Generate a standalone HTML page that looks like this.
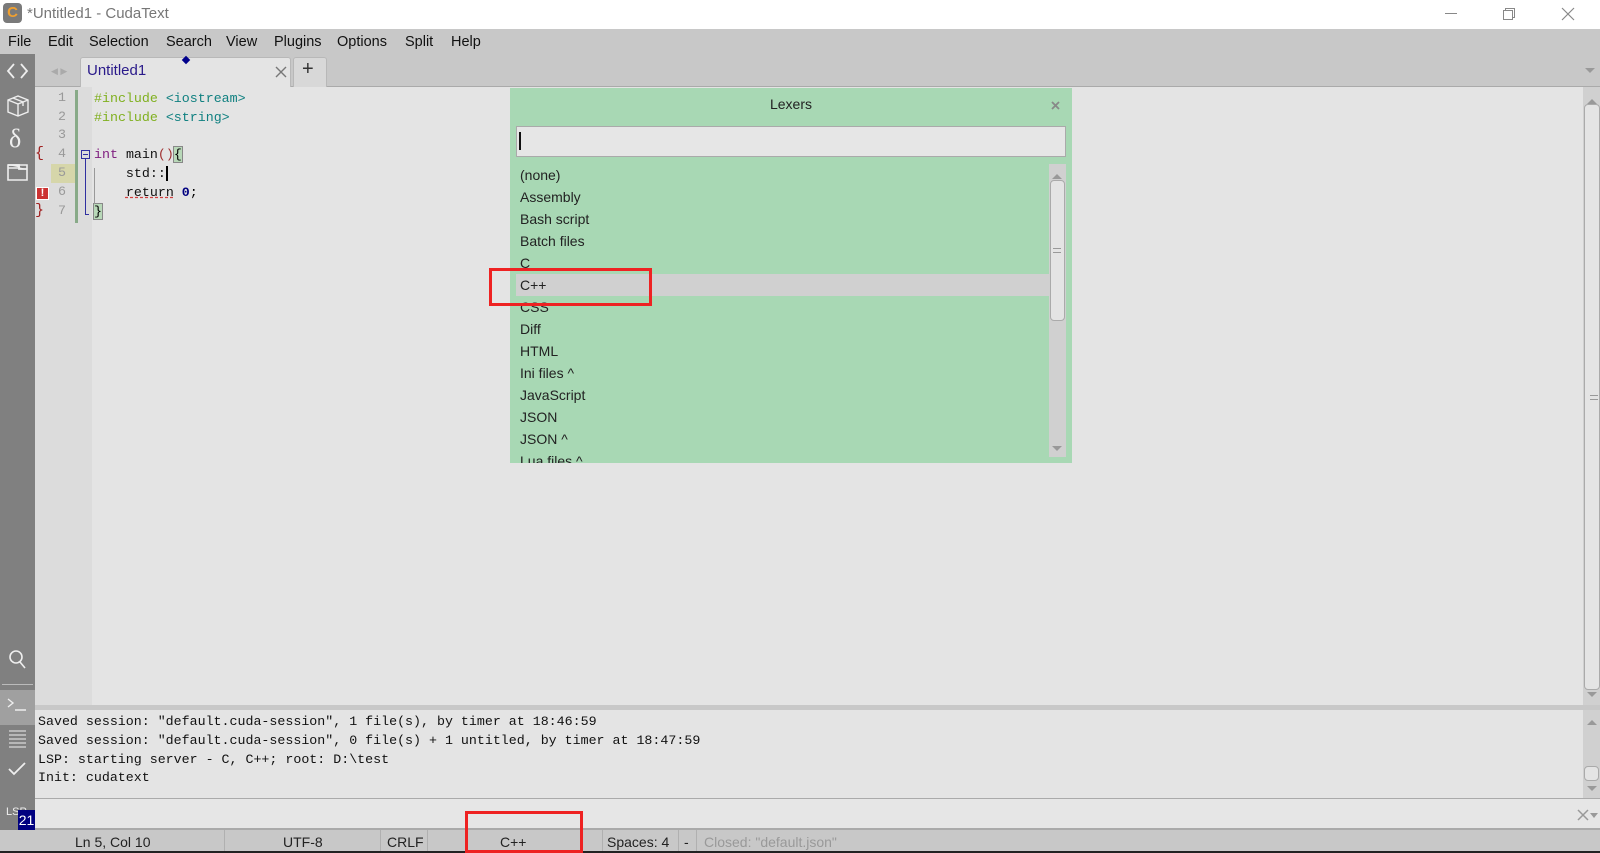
<!DOCTYPE html>
<html><head><meta charset="utf-8"><style>
*{margin:0;padding:0;box-sizing:border-box}
body{width:1600px;height:853px;overflow:hidden;background:#e4e4e4;font-family:"Liberation Sans",sans-serif;position:relative}
.a{position:absolute}
.mono{font-family:"Liberation Mono",monospace;font-size:13.3px;white-space:pre}
.menu span{position:absolute;top:5px;font-size:14.5px;color:#111}
.ln{position:absolute;left:40px;width:26px;text-align:right;color:#999;font-family:"Liberation Mono",monospace;font-size:13.3px}
.li{position:absolute;left:520px;font-size:14px;color:#222;white-space:nowrap}
.st{position:absolute;top:834px;font-size:14px;color:#222;white-space:nowrap}
.sep{position:absolute;top:830px;width:1px;height:21px;background:#b0b0b0}
</style></head><body>
<!-- title bar -->
<div class="a" style="left:0;top:0;width:1600px;height:29px;background:#fff"></div>
<div class="a" style="left:3px;top:3px;width:19px;height:20px;background:#7a7a7a;border-radius:4px"></div>
<div class="a" style="left:3px;top:4px;width:19px;text-align:center;font-size:15px;line-height:18px;color:#f0a030;font-weight:bold">C</div>
<div class="a" style="left:27px;top:5px;font-size:15px;color:#777">*Untitled1 - CudaText</div>
<div class="a" style="left:1445px;top:13px;width:12px;height:1px;background:#888"></div>
<div class="a" style="left:1505px;top:8px;width:10px;height:10px;border:1px solid #888"></div>
<div class="a" style="left:1503px;top:10px;width:10px;height:10px;border:1px solid #888;background:#fff"></div>
<svg class="a" style="left:1561px;top:7px" width="14" height="14"><path d="M1 1L13 13M13 1L1 13" stroke="#888" stroke-width="1.2"/></svg>
<!-- menu -->
<div class="a menu" style="left:0;top:29px;width:1600px;height:58px;background:#c8c8c8">
<span style="left:8px">File</span><span style="left:48px">Edit</span><span style="left:89px">Selection</span><span style="left:166px">Search</span><span style="left:226px">View</span><span style="left:274px">Plugins</span><span style="left:337px">Options</span><span style="left:405px">Split</span><span style="left:451px">Help</span>
</div>
<div class="a" style="left:35px;top:86px;width:1565px;height:1px;background:#aaa"></div>
<!-- tabs -->
<div class="a" style="left:51px;top:66px;color:#aaa;font-size:9px">◀ ▶</div>
<div class="a" style="left:80px;top:57px;width:211px;height:30px;background:#e4e4e4;border:1px solid #b8b8b8;border-bottom:none;border-radius:3px 3px 0 0"></div>
<div class="a" style="left:87px;top:62px;font-size:15px;color:#2a1a8a">Untitled1</div>
<svg class="a" style="left:275px;top:66px" width="12" height="12"><path d="M1 1L11 11M11 1L1 11" stroke="#777" stroke-width="1.4"/></svg>
<div class="a" style="left:183px;top:57px;width:6px;height:6px;background:#00008b;transform:rotate(45deg)"></div>
<div class="a" style="left:293px;top:57px;width:34px;height:30px;background:#d8d8d8;border:1px solid #b8b8b8;border-bottom:none;border-radius:3px 3px 0 0"></div>
<div class="a" style="left:302px;top:58px;font-size:20px;color:#333">+</div>
<div class="a" style="left:1585px;top:68px;border:5px solid transparent;border-top:5px solid #999"></div>
<!-- sidebar -->
<div class="a" style="left:0;top:54px;width:35px;height:777px;background:#808080"></div>
<div class="a" style="left:0;top:690px;width:35px;height:35px;background:#a0a0a0"></div>
<div class="a" style="left:2px;top:684px;width:31px;height:1px;background:#bbb"></div>
<svg class="a" style="left:0;top:54px" width="35" height="780" fill="none" stroke="#eee" stroke-width="1.8">
<path d="M14 10L8 17L14 24M21 10L27 17L21 24"/>
<path d="M8 46L18 42L28 46L28 58L18 62L8 58ZM8 46L18 50L28 46M18 50L18 62M13 44L23 48L23 52" stroke-width="1.4"/>
<text x="9" y="93" fill="#eee" stroke="none" font-size="26" font-family="Liberation Serif">δ</text>
<path d="M8 111H27V126H8ZM8 114H19V111" stroke-width="1.6"/>
<path d="M8 111H19V115H27" fill="#eee"/>
<circle cx="16" cy="603" r="6" stroke-width="1.6"/><path d="M20 608L25 614" stroke-width="1.6"/>
<path d="M8 645L13 649L8 653M15 656H26" stroke-width="1.4"/>
<path d="M9 677H26M9 681H26M9 685H26M9 689H26M9 693H26" stroke-width="1"/>
<path d="M9 715L14 720L25 709" stroke-width="1.8"/>
</svg>
<div class="a" style="left:6px;top:806px;font-size:11px;color:#eee">LSP</div>
<div class="a" style="left:18px;top:810px;width:17px;height:20px;background:#000080;color:#fff;font-size:14px;line-height:20px;text-align:center">21</div>
<!-- gutter -->
<div class="a" style="left:35px;top:87px;width:57px;height:618px;background:#dcdcdc"></div>
<div class="a" style="left:51px;top:164px;width:24px;height:19px;background:#d6d6aa"></div>
<div class="a" style="left:75px;top:90px;width:3px;height:133px;background:#88aa88"></div>
<div class="ln" style="top:90px">1</div><div class="ln" style="top:109px">2</div><div class="ln" style="top:127px">3</div><div class="ln" style="top:146px">4</div><div class="ln" style="top:165px">5</div><div class="ln" style="top:184px">6</div><div class="ln" style="top:203px">7</div>
<div class="a mono" style="left:35px;top:145px;color:#a02020;font-size:15px">{</div>
<div class="a mono" style="left:35px;top:202px;color:#a02020;font-size:15px">}</div>
<div class="a" style="left:36px;top:187px;width:13px;height:13px;background:#cc3333;border:1px solid #fff;color:#fff;font-size:11px;font-weight:bold;text-align:center;line-height:11px">!</div>
<div class="a" style="left:81px;top:150px;width:9px;height:9px;border:1px solid #3030a0"></div>
<div class="a" style="left:83px;top:154px;width:5px;height:1px;background:#3030a0"></div>
<div class="a" style="left:85px;top:159px;width:1px;height:56px;background:#3030a0"></div>
<div class="a" style="left:85px;top:214px;width:4px;height:1px;background:#3030a0"></div>
<!-- code -->
<div class="a mono" style="left:94px;top:90px;line-height:18.8px"><span style="color:#80b020">#include</span> <span style="color:#108080">&lt;iostream&gt;</span>
<span style="color:#80b020">#include</span> <span style="color:#108080">&lt;string&gt;</span>

<span style="color:#802080">int</span> <span style="color:#111">main</span><span style="color:#a03030">()</span><span style="background:#b8d8b8;outline:1px solid #888">{</span>
    <span style="color:#111">std::</span><span style="border-left:2px solid #000"></span>
    <span style="color:#111;text-decoration:underline dashed #d04040">return</span> <span style="color:#000080;font-weight:bold">0</span>;
<span style="background:#b8d8b8;outline:1px solid #888">}</span></div>
<div class="a" style="left:94px;top:168px;width:1px;height:36px;background:#999"></div>
<!-- editor scrollbar -->
<div class="a" style="left:1583px;top:87px;width:17px;height:618px;background:#d0d0d0"></div>
<div class="a" style="left:1587px;top:94px;border:5px solid transparent;border-bottom:5px solid #999"></div>
<div class="a" style="left:1584px;top:104px;width:16px;height:586px;border:1px solid #aaa;border-radius:4px;background:#e4e4e4"></div>
<div class="a" style="left:1590px;top:395px;width:8px;height:5px;border-top:1px solid #999;border-bottom:1px solid #999"></div>
<div class="a" style="left:1587px;top:692px;border:5px solid transparent;border-top:5px solid #999"></div>
<!-- lexers dialog -->
<div class="a" style="left:510px;top:88px;width:562px;height:375px;background:#a8d8b4"></div>
<div class="a" style="left:510px;top:96px;width:562px;text-align:center;font-size:14px;color:#222">Lexers</div>
<svg class="a" style="left:1051px;top:101px" width="9" height="9"><path d="M1 1L8 8M8 1L1 8" stroke="#888" stroke-width="1.8"/></svg>
<div class="a" style="left:516px;top:126px;width:550px;height:31px;background:#e6e6e6;border:1px solid #aaa"></div>
<div class="a" style="left:519px;top:132px;width:2px;height:18px;background:#111"></div>
<div class="a" style="left:516px;top:274px;width:533px;height:22px;background:#d0d0d0"></div>
<div class="a" style="left:510px;top:164px;width:562px;height:299px;overflow:hidden">
<div style="position:absolute;left:-510px;top:-164px;width:1100px;height:500px">
<div class="li" style="top:167px">(none)</div><div class="li" style="top:189px">Assembly</div><div class="li" style="top:211px">Bash script</div><div class="li" style="top:233px">Batch files</div><div class="li" style="top:255px">C</div><div class="li" style="top:277px">C++</div><div class="li" style="top:299px">CSS</div><div class="li" style="top:321px">Diff</div><div class="li" style="top:343px">HTML</div><div class="li" style="top:365px">Ini files ^</div><div class="li" style="top:387px">JavaScript</div><div class="li" style="top:409px">JSON</div><div class="li" style="top:431px">JSON ^</div><div class="li" style="top:453px">Lua files ^</div>
</div></div>
<div class="a" style="left:1049px;top:164px;width:17px;height:293px;background:#d0d0d0"></div>
<div class="a" style="left:1052px;top:169px;border:5px solid transparent;border-bottom:5px solid #999"></div>
<div class="a" style="left:1050px;top:180px;width:15px;height:141px;border:1px solid #aaa;border-radius:4px;background:#e4e4e4"></div>
<div class="a" style="left:1053px;top:248px;width:8px;height:5px;border-top:1px solid #999;border-bottom:1px solid #999"></div>
<div class="a" style="left:1052px;top:446px;border:5px solid transparent;border-top:5px solid #999"></div>
<!-- red box lexer -->
<div class="a" style="left:489px;top:268px;width:163px;height:38px;border:3px solid #ee2222"></div>
<!-- separator & output -->
<div class="a" style="left:35px;top:705px;width:1565px;height:5px;background:#c8c8c8"></div>
<div class="a mono" style="left:38px;top:713px;line-height:18.8px;color:#111">Saved session: "default.cuda-session", 1 file(s), by timer at 18:46:59
Saved session: "default.cuda-session", 0 file(s) + 1 untitled, by timer at 18:47:59
LSP: starting server - C, C++; root: D:\test
Init: cudatext</div>
<div class="a" style="left:1583px;top:710px;width:17px;height:88px;background:#d0d0d0"></div>
<div class="a" style="left:1587px;top:715px;border:5px solid transparent;border-bottom:5px solid #999"></div>
<div class="a" style="left:1584px;top:766px;width:15px;height:15px;border:1px solid #aaa;border-radius:4px;background:#e4e4e4"></div>
<div class="a" style="left:1587px;top:786px;border:5px solid transparent;border-top:5px solid #999"></div>
<!-- input -->
<div class="a" style="left:35px;top:798px;width:1565px;height:32px;background:#e6e6e6;border-top:1px solid #aaa;border-bottom:2px solid #aaa"></div>
<svg class="a" style="left:1577px;top:809px" width="12" height="12"><path d="M1 1L11 11M11 1L1 11" stroke="#999" stroke-width="1.5"/></svg>
<div class="a" style="left:1590px;top:813px;border:4px solid transparent;border-top:5px solid #999"></div>
<!-- status -->
<div class="a" style="left:0;top:830px;width:1600px;height:21px;background:#c8c8c8"></div>
<div class="a" style="left:0;top:851px;width:1600px;height:2px;background:#222"></div>
<div class="sep" style="left:224px"></div><div class="sep" style="left:380px"></div><div class="sep" style="left:427px"></div><div class="sep" style="left:602px"></div><div class="sep" style="left:678px"></div><div class="sep" style="left:696px"></div>
<div class="st" style="left:75px">Ln 5, Col 10</div>
<div class="st" style="left:283px">UTF-8</div>
<div class="st" style="left:387px">CRLF</div>
<div class="st" style="left:500px">C++</div>
<div class="st" style="left:607px">Spaces: 4</div>
<div class="st" style="left:684px">-</div>
<div class="st" style="left:704px;color:#999">Closed: "default.json"</div>
<div class="a" style="left:465px;top:811px;width:118px;height:42px;border:3px solid #ee2222"></div>
</body></html>
